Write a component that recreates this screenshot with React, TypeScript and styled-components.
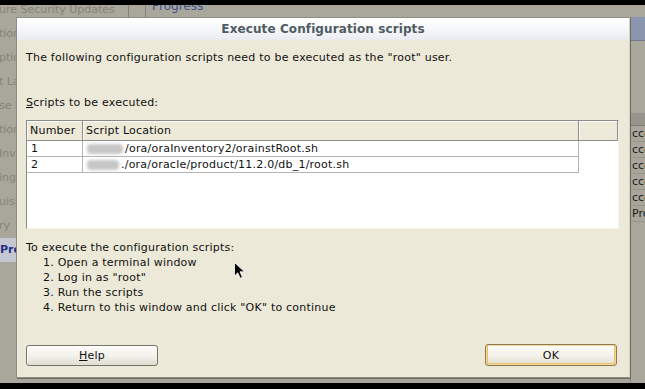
import React from 'react';
import styled, { createGlobalStyle } from 'styled-components';

const Global = createGlobalStyle`
  html, body { margin: 0; padding: 0; background: #000; }
  body { font-family: "DejaVu Sans", Verdana, sans-serif; }
`;

const Screen = styled.div`
  position: relative;
  width: 645px;
  height: 389px;
  overflow: hidden;
  background: #000;
  padding: 5px 0 6px;
  box-sizing: border-box;
`;

const Desktop = styled.div`
  height: 100%;
  background: #a9a69b;
  display: flex;
  overflow: hidden;
  font-size: 11px;
`;

const LeftNav = styled.div`
  width: 128px;
  flex: none;
  display: flex;
  flex-direction: column;
  margin-top: -7px;
  overflow: hidden;
`;

const NavItem = styled.div<{ $active?: boolean }>`
  height: 24px;
  line-height: 24px;
  white-space: nowrap;
  padding-left: ${(p) => (p.$active ? '1px' : '0')};
  margin-left: -1px;
  color: ${(p) => (p.$active ? '#1f2f86' : '#85837a')};
  font-weight: ${(p) => (p.$active ? 'bold' : 'normal')};
  background: ${(p) => (p.$active ? '#c4c7d2' : 'transparent')};
`;

const Separator = styled.div`
  width: 16px;
  flex: none;
  border-left: 1px solid #85837a;
  border-right: 1px solid #85837a;
  height: 12px;
`;

const Main = styled.div`
  flex: 1;
  display: flex;
  flex-direction: column;
  min-width: 0;
`;

const MainTop = styled.div`
  height: 12px;
  padding-left: 6px;
  color: #3f5190;
  line-height: 2px;
  overflow: hidden;
  font-size: 12px;
`;

const MainBody = styled.div`
  flex: 1;
  display: flex;
  justify-content: flex-end;
`;

const RightCol = styled.div`
  width: 15px;
  display: flex;
  flex-direction: column;
  border-left: 1px solid #8c8a81;
  box-sizing: border-box;
`;

const RightHead = styled.div`
  height: 23px;
  background: #8a96ad;
  border-bottom: 1px solid #6f7a8f;
`;

const RightGap = styled.div<{ $h: number }>`
  height: ${(p) => p.$h}px;
  flex: none;
`;

const RightColHead = styled.div`
  height: 12px;
  background: #96948a;
  border-bottom: 1px solid #7a786f;
`;

const RightRow = styled.div`
  height: 16px;
  line-height: 16px;
  padding-left: 1px;
  color: #1c1c1c;
  white-space: nowrap;
  overflow: hidden;
  border-bottom: 1px solid #97958b;
  box-sizing: border-box;
  background: #a8a59a;
`;

const Dialog = styled.div`
  position: absolute;
  left: 16px;
  top: 17px;
  width: 614px;
  height: 361px;
  box-sizing: border-box;
  background: #ece9d8;
  border: 1px solid #8f8d83;
  border-right-color: #d6d3c6;
  box-shadow: 1px 1px 0 #6e6c64;
  display: flex;
  flex-direction: column;
  font-size: 11px;
  letter-spacing: 0.22px;
  color: #111;
`;

const TitleBar = styled.div`
  height: 22px;
  flex: none;
  background: linear-gradient(#ffffff, #f4f5f8 60%, #eaebf0);
  display: flex;
  align-items: center;
  justify-content: center;
  font-weight: bold;
  font-size: 12px;
  letter-spacing: 0.1px;
  color: #4f5b63;
`;

const Body = styled.div`
  flex: 1;
  display: flex;
  flex-direction: column;
  padding: 0 12px 11px 9px;
`;

const Line = styled.div<{ $mt?: number; $indent?: number }>`
  line-height: 15px;
  margin-top: ${(p) => p.$mt ?? 0}px;
  padding-left: ${(p) => p.$indent ?? 0}px;
  white-space: nowrap;
`;

const Mnemonic = styled.span`
  text-decoration: underline;
`;

const ScrollPane = styled.div`
  margin-top: 10px;
  width: 593px;
  height: 109px;
  box-sizing: border-box;
  background: #fff;
  border-top: 1px solid #8a8a8a;
  border-left: 1px solid #8a8a8a;
  border-right: 1px solid #f4f3ee;
  border-bottom: 1px solid #f4f3ee;
  display: flex;
  flex-direction: column;
`;

const Grid = styled.div`
  display: grid;
  grid-template-columns: 56px 496px 1fr;
`;

const HeadCell = styled.div`
  height: 20px;
  line-height: 19px;
  box-sizing: border-box;
  padding-left: 3px;
  background: #ece9d8;
  border-right: 1px solid #8e8e8e;
  border-bottom: 1px solid #8e8e8e;
  box-shadow: inset 1px 1px 0 #fbfaf6;
  white-space: nowrap;
`;

const Cell = styled.div`
  height: 16px;
  line-height: 15px;
  box-sizing: border-box;
  padding-left: 4px;
  border-right: 1px solid #b4b4b4;
  border-bottom: 1px solid #b4b4b4;
  white-space: nowrap;
  display: flex;
  align-items: center;
`;

const EmptyCell = styled.div`
  height: 16px;
`;

const Redacted = styled.span<{ $w: number }>`
  display: inline-block;
  width: ${(p) => p.$w}px;
  height: 10px;
  background: #c6c6c6;
  filter: blur(1.6px);
  border-radius: 4px;
  margin-right: 2px;
`;

const Footer = styled.div`
  margin-top: auto;
  display: flex;
  justify-content: space-between;
  align-items: flex-end;
`;

const Button = styled.button<{ $focused?: boolean }>`
  width: 132px;
  height: ${(p) => (p.$focused ? 22 : 21)}px;
  box-sizing: border-box;
  font-family: "DejaVu Sans", Verdana, sans-serif;
  font-size: 11px;
  letter-spacing: 0.2px;
  color: #111;
  border-radius: 3px;
  padding: 0;
  border: 1px solid ${(p) => (p.$focused ? '#8a7b55' : '#75746c')};
  background: linear-gradient(#fcfcfa, #f2f1ea 55%, #e0ddd0);
  box-shadow: ${(p) =>
    p.$focused
      ? 'inset 0 0 0 1px #f6d79a, inset 2px 0 0 #efbd63, inset -2px 0 0 #efbd63, inset 0 -2px 0 #efc474'
      : 'inset 1px 1px 0 #ffffff'};
`;

const Cursor = styled.svg`
  position: absolute;
  left: 234px;
  top: 262px;
`;

const navItems = [
  'ure Security Updates',
  'tion Option',
  'ptions',
  't Languages',
  'se Edition',
  'tion Location',
  'Inventory',
  'ing System Groups',
  'uisite Checks',
  'ry',
];

const rightRows = ['cceeded', 'cceeded', 'cceeded', 'cceeded', 'cceeded', 'Progress'];

const scripts = [
  { n: '1', blur: 36, path: '/ora/oraInventory2/orainstRoot.sh' },
  { n: '2', blur: 32, path: './ora/oracle/product/11.2.0/db_1/root.sh' },
];

const steps = [
  '1. Open a terminal window',
  '2. Log in as "root"',
  '3. Run the scripts',
  '4. Return to this window and click "OK" to continue',
];

export default function App() {
  return (
    <>
      <Global />
      <Screen>
        <Desktop>
          <LeftNav>
            {navItems.map((t, i) => (
              <NavItem key={i}>{t}</NavItem>
            ))}
            <NavItem $active>Product</NavItem>
          </LeftNav>
          <Separator />
          <Main>
            <MainTop>Progress</MainTop>
            <MainBody>
              <RightCol>
                <RightHead />
                <RightGap $h={72} />
                <RightColHead />
                {rightRows.map((r, i) => (
                  <RightRow key={i}>{r}</RightRow>
                ))}
              </RightCol>
            </MainBody>
          </Main>
        </Desktop>

        <Dialog>
          <TitleBar>Execute Configuration scripts</TitleBar>
          <Body>
            <Line $mt={10}>The following configuration scripts need to be executed as the "root" user.</Line>
            <Line $mt={30}>
              <Mnemonic>S</Mnemonic>cripts to be executed:
            </Line>
            <ScrollPane>
              <Grid>
                <HeadCell>Number</HeadCell>
                <HeadCell>Script Location</HeadCell>
                <HeadCell />
                {scripts.map((s) => (
                  <React.Fragment key={s.n}>
                    <Cell>{s.n}</Cell>
                    <Cell>
                      <Redacted $w={s.blur} />
                      {s.path}
                    </Cell>
                    <EmptyCell />
                  </React.Fragment>
                ))}
              </Grid>
            </ScrollPane>
            <Line $mt={11}>To execute the configuration scripts:</Line>
            {steps.map((s) => (
              <Line key={s} $indent={17}>
                {s}
              </Line>
            ))}
            <Footer>
              <Button>
                <Mnemonic>H</Mnemonic>elp
              </Button>
              <Button $focused>OK</Button>
            </Footer>
          </Body>
        </Dialog>

        <Cursor width="12" height="18" viewBox="0 0 12 18">
          <path d="M0.5 0.5 L0.5 14 L3.8 10.8 L6.2 16.2 L8.4 15.2 L6 9.8 L10.5 9.8 Z" fill="#000" stroke="#fff" strokeWidth="0.8" />
        </Cursor>
      </Screen>
    </>
  );
}
